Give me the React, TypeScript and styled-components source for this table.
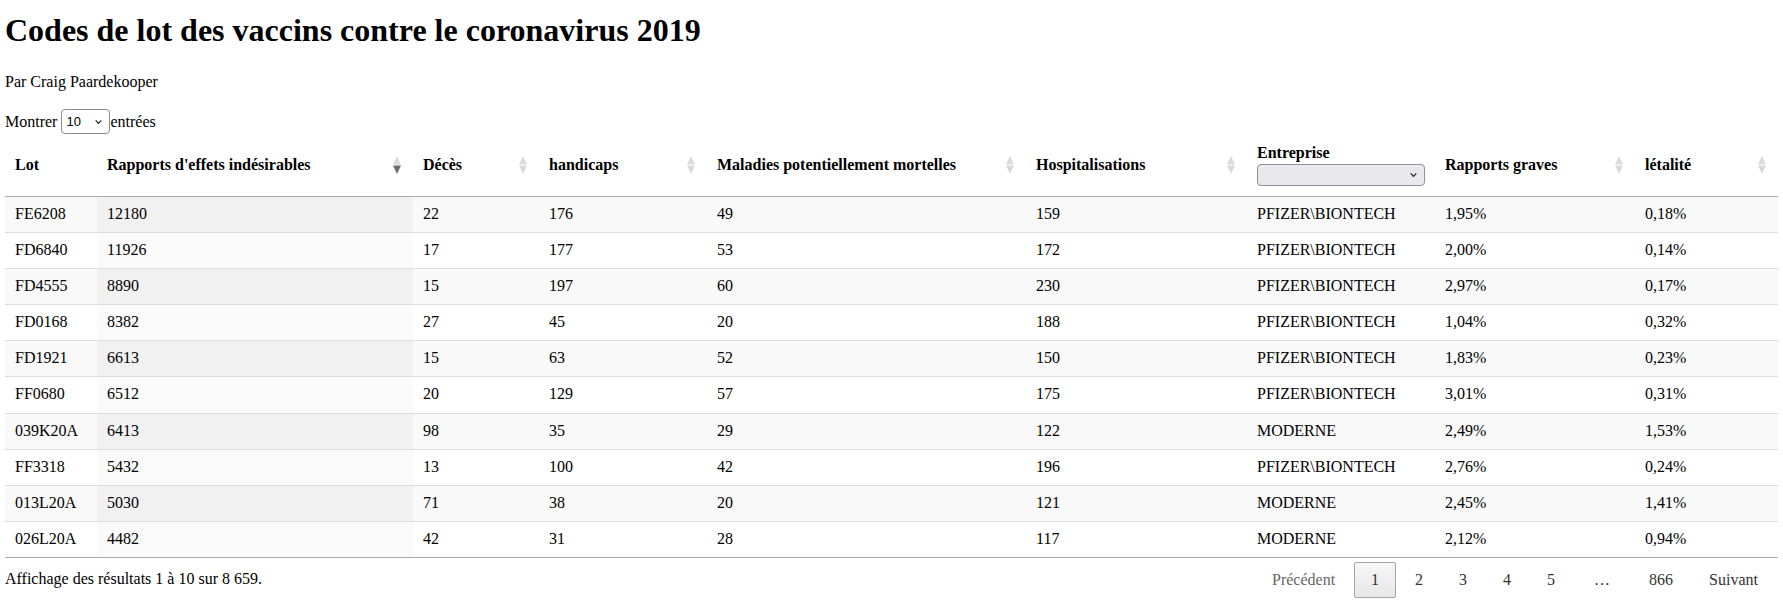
import React from 'react';
import styled, { createGlobalStyle } from 'styled-components';

const GlobalStyle = createGlobalStyle`
    html, body {
        margin: 0;
        padding: 0;
        background: #fff;
    }
    body {
        font-family: "Liberation Serif", "Times New Roman", serif;
        font-size: 16px;
        color: #000;
    }
`;

const Page = styled.div`
    padding: 0 5px;
`;

const Title = styled.h1`
    margin: 12px 0 0;
    font-size: 32px;
    line-height: 37px;
    font-weight: bold;
`;

const Byline = styled.p`
    margin: 24px 0 0;
`;

const LengthRow = styled.div`
    display: flex;
    align-items: center;
    height: 25px;
    margin-top: 18px;
    white-space: pre;
`;

const SelectWrap = styled.span<{ $w: number; $h: number }>`
    position: relative;
    display: inline-block;
    width: ${(p) => p.$w}px;
    height: ${(p) => p.$h}px;
`;

const NativeSelect = styled.select<{ $filled?: boolean }>`
    appearance: none;
    -webkit-appearance: none;
    box-sizing: border-box;
    width: 100%;
    height: 100%;
    margin: 0;
    padding: 0 18px 0 4px;
    border: 1px solid ${(p) => (p.$filled ? '#8f8f9d' : '#8a8a8a')};
    border-radius: 4px;
    background: ${(p) => (p.$filled ? '#e9e9ed' : '#fff')};
    font-family: "Liberation Sans", Arial, sans-serif;
    font-size: 13px;
    color: #000;
`;

const Chevron = styled.svg`
    position: absolute;
    right: 8px;
    top: 50%;
    transform: translateY(-50%);
    pointer-events: none;
`;

const DropArrow = () => (
    <Chevron width="7" height="5" viewBox="0 0 7 5">
        <path d="M0.7 0.8 L3.5 3.8 L6.3 0.8" fill="none" stroke="#222" strokeWidth="1.2" />
    </Chevron>
);

const Table = styled.table`
    width: 100%;
    table-layout: fixed;
    border-collapse: separate;
    border-spacing: 0;
    border-bottom: 1px solid #a9a9a9;
`;

const HeadCell = styled.th<{ $sortable?: boolean }>`
    position: relative;
    box-sizing: border-box;
    padding: 10px ${(p) => (p.$sortable ? '26px' : '10px')} 10px 10px;
    text-align: left;
    vertical-align: middle;
    font-weight: bold;
    border-bottom: 1px solid #a9a9a9;
    white-space: nowrap;
`;

const HeadSelect = styled.div`
    margin-top: 2px;
`;

const SortMark = styled.svg`
    position: absolute;
    right: 12px;
    top: 50%;
    transform: translateY(-50%);
`;

const SortIcon = ({ desc }: { desc?: boolean }) => (
    <SortMark width="8" height="18" viewBox="0 0 8 18">
        <path d="M4 0 L8 8.4 L0 8.4 Z" fill="#dadada" />
        <path d="M4 18 L8 9.6 L0 9.6 Z" fill={desc ? '#6b6b6b' : '#dadada'} />
    </SortMark>
);

const Cell = styled.td<{ $odd: boolean; $sorted?: boolean; $first: boolean }>`
    padding: 8px 10px 9px;
    line-height: 18.1px;
    border-top: ${(p) => (p.$first ? 'none' : '1px solid #ddd')};
    background: ${(p) =>
        p.$sorted ? (p.$odd ? '#f1f1f1' : '#fafafa') : p.$odd ? '#f9f9f9' : '#fff'};
    white-space: nowrap;
`;

const Footer = styled.div`
    display: flex;
    justify-content: space-between;
    align-items: flex-start;
`;

const Info = styled.div`
    padding-top: 12px;
`;

const Paginate = styled.div`
    display: flex;
    align-items: flex-start;
    padding: 4px 3px 0 0;
`;

const PageButton = styled.span<{ $current?: boolean; $disabled?: boolean }>`
    box-sizing: border-box;
    min-width: 24px;
    margin-left: 2px;
    padding: 8px 16px;
    line-height: 18px;
    text-align: center;
    border: 1px solid ${(p) => (p.$current ? '#a5a5a5' : 'transparent')};
    border-radius: 2px;
    background: ${(p) =>
        p.$current ? 'linear-gradient(to bottom, #f7f7f7 0%, #e6e6e6 100%)' : 'transparent'};
    color: ${(p) => (p.$disabled ? '#666' : '#333')};
`;

const Ellipsis = styled.span`
    padding: 9px 16px;
    margin: 0 4px 0 6px;
    line-height: 18px;
    color: #333;
`;

const columns = [
    { label: "Lot", width: 92, sortable: false },
    { label: "Rapports d'effets indésirables", width: 316, sortable: true, desc: true },
    { label: "Décès", width: 126, sortable: true },
    { label: "handicaps", width: 168, sortable: true },
    { label: "Maladies potentiellement mortelles", width: 319, sortable: true },
    { label: "Hospitalisations", width: 221, sortable: true },
    { label: "Entreprise", width: 188, sortable: false, filter: true },
    { label: "Rapports graves", width: 200, sortable: true },
    { label: "létalité", width: 143, sortable: true },
];

const rows = [
    ['FE6208', '12180', '22', '176', '49', '159', 'PFIZER\\BIONTECH', '1,95%', '0,18%'],
    ['FD6840', '11926', '17', '177', '53', '172', 'PFIZER\\BIONTECH', '2,00%', '0,14%'],
    ['FD4555', '8890', '15', '197', '60', '230', 'PFIZER\\BIONTECH', '2,97%', '0,17%'],
    ['FD0168', '8382', '27', '45', '20', '188', 'PFIZER\\BIONTECH', '1,04%', '0,32%'],
    ['FD1921', '6613', '15', '63', '52', '150', 'PFIZER\\BIONTECH', '1,83%', '0,23%'],
    ['FF0680', '6512', '20', '129', '57', '175', 'PFIZER\\BIONTECH', '3,01%', '0,31%'],
    ['039K20A', '6413', '98', '35', '29', '122', 'MODERNE', '2,49%', '1,53%'],
    ['FF3318', '5432', '13', '100', '42', '196', 'PFIZER\\BIONTECH', '2,76%', '0,24%'],
    ['013L20A', '5030', '71', '38', '20', '121', 'MODERNE', '2,45%', '1,41%'],
    ['026L20A', '4482', '42', '31', '28', '117', 'MODERNE', '2,12%', '0,94%'],
];

const pages = ['1', '2', '3', '4', '5'];

export default function App() {
    return (
        <Page>
            <GlobalStyle />
            <Title>Codes de lot des vaccins contre le coronavirus 2019</Title>
            <Byline>Par Craig Paardekooper</Byline>
            <LengthRow>
                Montrer{' '}
                <SelectWrap $w={49} $h={25}>
                    <NativeSelect defaultValue="10">
                        <option value="10">10</option>
                        <option value="25">25</option>
                        <option value="50">50</option>
                        <option value="100">100</option>
                    </NativeSelect>
                    <DropArrow />
                </SelectWrap>
                entrées
            </LengthRow>
            <Table>
                <colgroup>
                    {columns.map((c) => (
                        <col key={c.label} style={{ width: c.width }} />
                    ))}
                </colgroup>
                <thead>
                    <tr>
                        {columns.map((c) => (
                            <HeadCell key={c.label} $sortable={c.sortable}>
                                {c.label}
                                {c.filter && (
                                    <HeadSelect>
                                        <SelectWrap $w={168} $h={22}>
                                            <NativeSelect $filled defaultValue="">
                                                <option value=""></option>
                                                <option value="PFIZER">PFIZER\BIONTECH</option>
                                                <option value="MODERNE">MODERNE</option>
                                            </NativeSelect>
                                            <DropArrow />
                                        </SelectWrap>
                                    </HeadSelect>
                                )}
                                {c.sortable && <SortIcon desc={c.desc} />}
                            </HeadCell>
                        ))}
                    </tr>
                </thead>
                <tbody>
                    {rows.map((r, i) => (
                        <tr key={r[0]}>
                            {r.map((v, j) => (
                                <Cell key={j} $odd={i % 2 === 0} $sorted={j === 1} $first={i === 0}>
                                    {v}
                                </Cell>
                            ))}
                        </tr>
                    ))}
                </tbody>
            </Table>
            <Footer>
                <Info>Affichage des résultats 1 à 10 sur 8 659.</Info>
                <Paginate>
                    <PageButton $disabled>Précédent</PageButton>
                    {pages.map((p) => (
                        <PageButton key={p} $current={p === '1'}>
                            {p}
                        </PageButton>
                    ))}
                    <Ellipsis>…</Ellipsis>
                    <PageButton>866</PageButton>
                    <PageButton>Suivant</PageButton>
                </Paginate>
            </Footer>
        </Page>
    );
}
